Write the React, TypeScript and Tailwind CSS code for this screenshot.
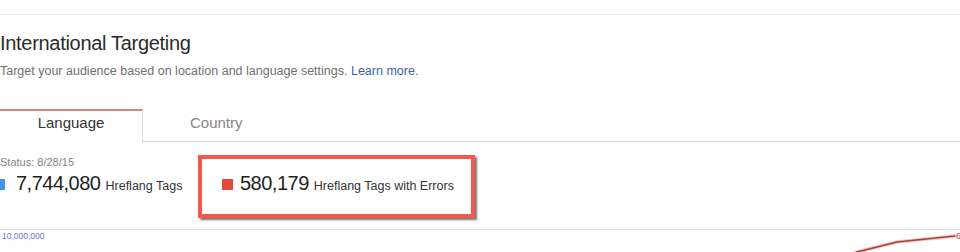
import React from "react";

const font = "font-['Liberation_Sans',Arial,Helvetica,sans-serif]";

const App: React.FC = () => {
  return (
    <div className={`w-[960px] h-[252px] overflow-hidden bg-white ${font}`}>
      {/* top divider */}
      <div className="h-[15px] border-b border-[#ececec]" />

      <h1 className="mt-[16px] text-[20px] leading-[24px] tracking-[-0.3px] text-[#2b2b2b]">
        International Targeting
      </h1>
      <p className="mt-[8px] text-[12.5px] leading-[16px] text-[#6f6f6f]">
        Target your audience based on location and language settings.{" "}
        <a className="text-[#3b62ab]">Learn more.</a>
      </p>

      {/* tabs */}
      <div className="mt-[30px] flex border-b border-[#dcdcdc]">
        <div className="-mb-px h-[33px] w-[143px] border-t-2 border-r border-t-[#de8676] border-r-[#dcdcdc] bg-white pt-[3px] text-center text-[15px] leading-[18px] text-[#333]">
          Language
        </div>
        <div className="h-[32px] pl-[47px] pt-[5px] text-[15px] leading-[18px] text-[#858585]">
          Country
        </div>
      </div>

      {/* stats */}
      <div className="mt-[13px] flex items-start">
        <div className="w-[198px]">
          <div className="text-[11px] leading-[14px] text-[#858585]">Status: 8/28/15</div>
          <div className="mt-[2px] flex items-baseline -ml-[6px]">
            <span className="mr-[11px] inline-block h-[11px] w-[11px] bg-[#4592e6]" />
            <span className="text-[20px] leading-[24px] tracking-[-0.5px] text-[#1f1f1f]">7,744,080</span>
            <span className="ml-[5px] text-[12.5px] text-[#333]">Hreflang Tags</span>
          </div>
        </div>

        <div className="h-[63px] w-[277px] border-4 border-[#f4584b] bg-white pl-[20px] pt-[12px] shadow-[2px_2px_2px_rgba(0,0,0,0.55)]">
          <div className="flex items-baseline">
            <span className="mr-[7px] inline-block h-[11px] w-[11px] bg-[#e2493a]" />
            <span className="text-[20px] leading-[24px] tracking-[-0.5px] text-[#1f1f1f]">580,179</span>
            <span className="ml-[5px] text-[12.5px] text-[#333]">Hreflang Tags with Errors</span>
          </div>
        </div>
      </div>

      {/* chart */}
      <div className="relative mt-[11px] h-[30px] border-t border-[#dedede]">
        <div className="pl-[2px] pt-[1px] text-[8.5px] leading-[10px] text-[#5f7bc2]">10,000,000</div>
        <svg className="absolute left-0 top-0" width="960" height="30" viewBox="0 0 960 30">
          <polyline
            points="845,27 857,22 897,12 955,6"
            fill="none"
            stroke="#f4c6bf"
            strokeWidth="3.5"
            strokeLinecap="round"
          />
          <polyline
            points="845,27 857,22 897,12 955,6"
            fill="none"
            stroke="#a8433a"
            strokeWidth="1.5"
            strokeLinecap="round"
          />
          <text x="956" y="9" fontSize="9" fill="#c0463b">6</text>
        </svg>
      </div>
    </div>
  );
};

export default App;
